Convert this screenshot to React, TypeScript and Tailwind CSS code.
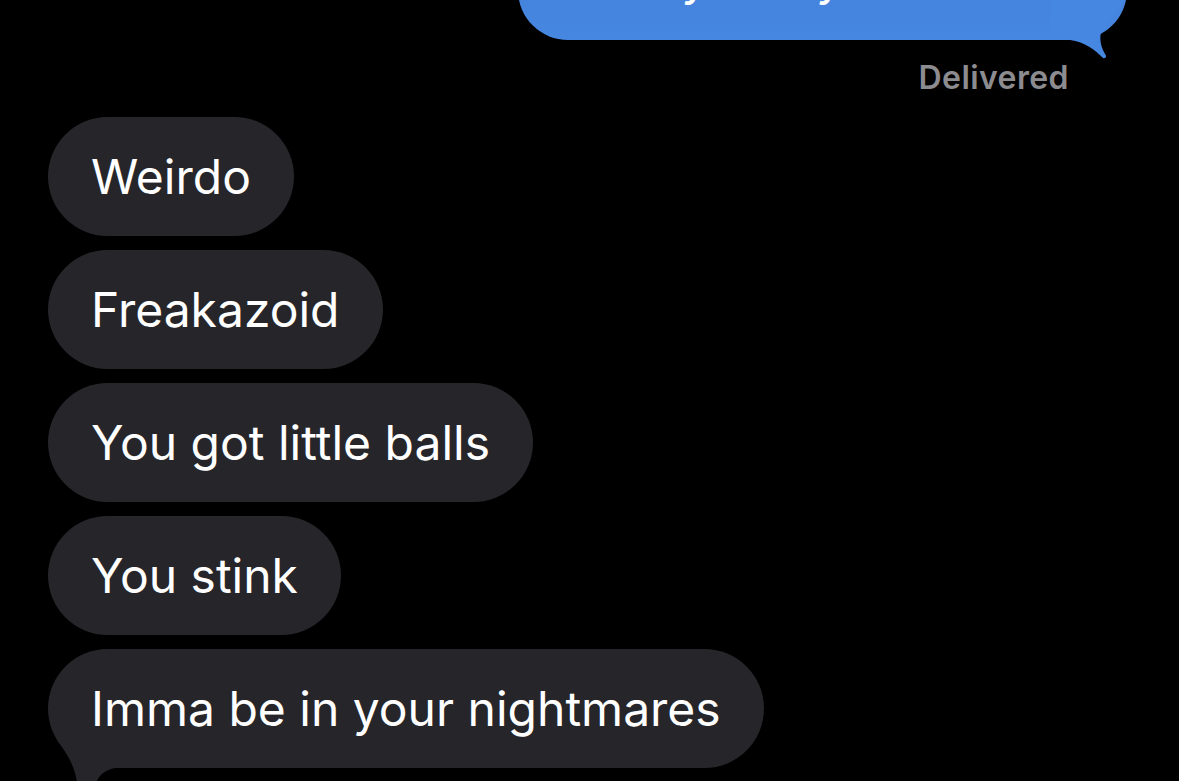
import React from "react";

const msgs = ["Weirdo", "Freakazoid", "You got little balls", "You stink", "Imma be in your nightmares"];

export default function App() {
  return (
    <div
      className="relative w-full h-[781px] overflow-hidden bg-black"
      style={{ fontFamily: "Inter, 'Noto Sans', sans-serif" }}
    >
      {/* outgoing blue bubble (mostly scrolled off) */}
      <div className="flex justify-end pr-[52px]">
        <div className="relative -mt-[60px] h-[100px] w-[609px] rounded-[50px] bg-gradient-to-b from-[#4380d9] to-[#4687e1]">
          <div className="absolute left-[44px] bottom-[38px] h-[60px] w-[500px] whitespace-nowrap text-[48px] leading-none text-white">
            <span className="absolute left-[30px] bottom-0">Okay</span>
            <span className="absolute left-[254px] bottom-0">you</span>
          </div>
          <svg
            className="absolute -right-[4px] -bottom-[20px]"
            width="80"
            height="70"
            viewBox="0 0 80 70"
          >
            <path
              d="M0,50 L19,50 C34,52 44,60 52,68 C55,69 56,66 54,64 C49,56 48,46 51,40 C58,30 72,20 76,0 L0,0 Z"
              fill="#4687e1"
            />
          </svg>
        </div>
      </div>

      {/* Delivered */}
      <div className="flex justify-end pr-[110px] mt-[19px]">
        <span className="text-[32px] leading-[38px] font-semibold tracking-[0.4px] text-[#8c8c90]">Delivered</span>
      </div>

      {/* incoming gray bubbles */}
      <div className="flex flex-col items-start gap-[14px] pl-[48px] mt-[20px]">
        {msgs.map((m, i) => (
          <div
            key={m}
            className="relative flex h-[119px] items-center rounded-[60px] bg-[#26262a] px-[43px]"
          >
            <span className="relative z-10 whitespace-nowrap text-[48px] leading-none text-white">{m}</span>
            {i === msgs.length - 1 && (
              <svg className="absolute left-0 top-[80px]" width="80" height="70" viewBox="0 0 80 70">
                <path d="M10,12 C20,27 28,37 30,62 L44,70 C46,52 52,42 67,39 L67,12 Z" fill="#26262a" />
              </svg>
            )}
          </div>
        ))}
      </div>
    </div>
  );
}
